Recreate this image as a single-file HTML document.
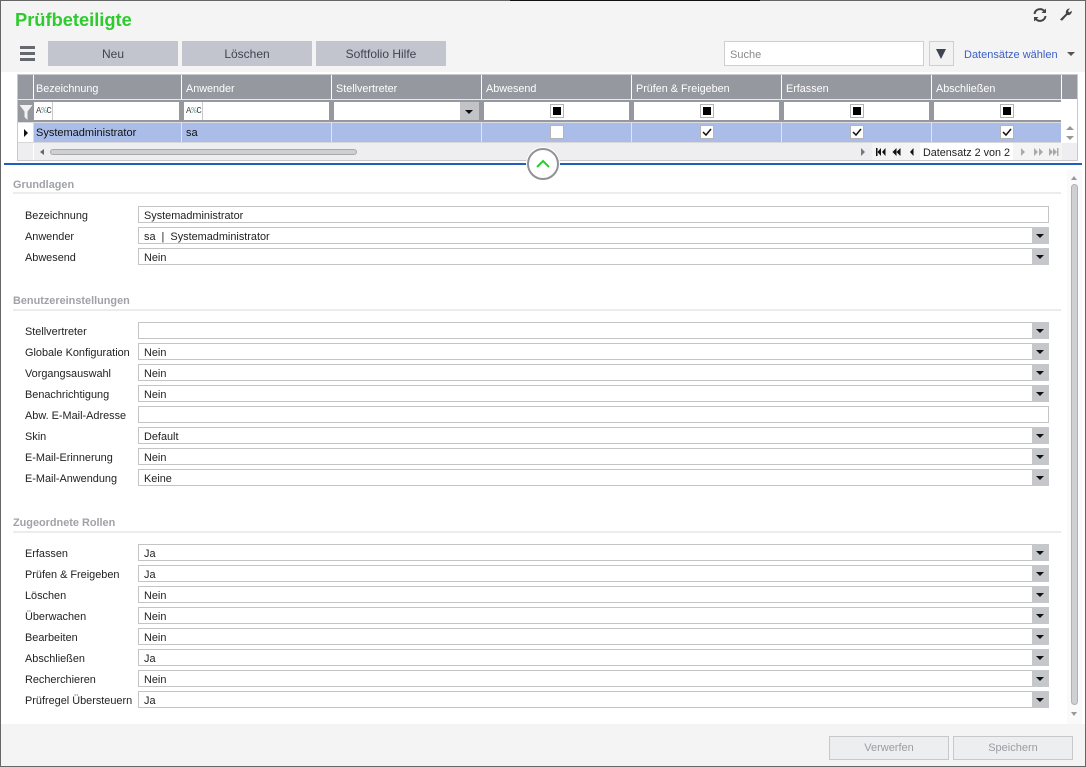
<!DOCTYPE html>
<html><head><meta charset="utf-8"><style>
*{box-sizing:border-box}
html,body{margin:0;padding:0}
body{width:1086px;height:767px;position:relative;overflow:hidden;background:#fff;font-family:"Liberation Sans",sans-serif;font-size:11px;color:#222}
div,span,svg{position:absolute}
.t{white-space:nowrap;line-height:14px}
.btn{top:41px;width:130px;height:25px;background:#c2c5cd;color:#3e4450;text-align:center;line-height:27px;font-weight:400;font-size:12px}
.gh{top:75px;height:24px;line-height:29px;color:#fff;background:#96989f;padding-left:2px;font-size:10.800px;white-space:nowrap}
.sep{width:1px;background:#fff}
.fc{top:102px;height:18px;background:#fff}
.cb{width:14px;height:14px;background:#fff;border:1px solid #b4b4b4}
.cb i{position:absolute;left:2px;top:2px;width:8px;height:8px;background:#000}
.lab{left:25px;white-space:nowrap;line-height:14px;color:#222;font-size:10.900px;margin-top:1px}
.in{left:138px;width:911px;height:17px;border:1px solid #c4c4c4;background:#fff;padding-left:5px;line-height:19px;font-size:10.900px;color:#222;white-space:nowrap;overflow:hidden}
.dd{left:1032px;width:17px;height:17px;background:#c6c7ca}
.dd:after{content:"";position:absolute;left:4px;top:7px;border-left:4px solid transparent;border-right:4px solid transparent;border-top:4px solid #111}
.h{left:13px;font-weight:700;color:#a0a2a8;font-size:10.900px;line-height:14px;white-space:nowrap;margin-top:1px}
.hl{left:13px;width:1048px;height:2px;background:#ececec}
.foot{top:736px;width:120px;height:24px;background:#edeef0;border:1px solid #c6c8cc;color:#9a9ca2;text-align:center;line-height:23px;font-size:11px;font-weight:400}
</style></head><body>
<div style="left:0;top:0;width:1086px;height:72px;background:#f4f4f4"></div>
<div style="left:0;top:724px;width:1086px;height:43px;background:#f4f4f4"></div>

<div class="t" style="left:15px;top:9px;font-size:18.300px;line-height:21px;font-weight:700;color:#2ecb2e">Prüfbeteiligte</div>

<svg style="left:1032px;top:7px" width="16" height="16" viewBox="0 0 16 16" fill="none" stroke="#444" stroke-width="2"><path d="M2.500 7A5.600 5.600 0 0 1 12.400 4.200"/><path d="M13.500 9A5.600 5.600 0 0 1 3.600 11.800"/><path d="M14 1.500V6H9.500z" fill="#444" stroke="none"/><path d="M2 14.500V10H6.500z" fill="#444" stroke="none"/></svg>
<svg style="left:1059px;top:7px" width="14" height="15" viewBox="0 0 14 15"><path d="M1 12.500L7 6.500C6.300 4 7.800 1.500 11 1.500L9 4l1.300 1.500 2.500-1.800C13 6.800 10.500 8.600 8.300 8L3 13.800z" fill="#444"/></svg>

<div style="left:20px;top:46px;width:15px;height:3px;background:#666970"></div>
<div style="left:20px;top:52px;width:15px;height:3px;background:#666970"></div>
<div style="left:20px;top:58px;width:15px;height:3px;background:#666970"></div>
<div class="btn" style="left:48px">Neu</div>
<div class="btn" style="left:182px">Löschen</div>
<div class="btn" style="left:316px">Softfolio Hilfe</div>

<div style="left:724px;top:41px;width:200px;height:25px;background:#fff;border:1px solid #cfcfcf;color:#8a8a8a;padding-left:5px;line-height:25px;font-size:11px"><span style="position:relative;top:1px">Suche</span></div>
<div style="left:929px;top:41px;width:25px;height:25px;background:#f2f2f2;border:1px solid #cfcfcf"></div>
<div style="left:936px;top:49px;width:0;height:0;border-left:5px solid transparent;border-right:5px solid transparent;border-top:10px solid #3e4450"></div>
<div class="t" style="left:964px;top:48px;color:#3b5fc4;font-size:11px">Datensätze wählen</div>
<div style="left:1067px;top:52px;width:0;height:0;border-left:4px solid transparent;border-right:4px solid transparent;border-top:4px solid #555"></div>

<!-- grid -->
<div style="left:17px;top:74px;width:1061px;height:87px;background:#fff;border:1px solid #c8c9cc"></div>
<div style="left:18px;top:75px;width:1059px;height:24px;background:#96989f"></div>
<div style="left:18px;top:99px;width:1043px;height:23px;background:#96989f"></div>
<div style="left:18px;top:99px;width:1043px;height:1px;background:#e8e8ea"></div>
<div class="gh" style="left:34px;width:147px">Bezeichnung</div>
<div class="gh" style="left:183px;width:148px;padding-left:3px">Anwender</div>
<div class="gh" style="left:333px;width:148px;padding-left:3px">Stellvertreter</div>
<div class="gh" style="left:483px;width:148px;padding-left:3px">Abwesend</div>
<div class="gh" style="left:633px;width:148px;padding-left:3px">Prüfen &amp; Freigeben</div>
<div class="gh" style="left:783px;width:148px;padding-left:3px">Erfassen</div>
<div class="gh" style="left:933px;width:128px;padding-left:3px">Abschließen</div>
<div class="sep" style="left:33px;top:75px;height:24px"></div>
<div class="sep" style="left:181px;top:75px;height:24px"></div>
<div class="sep" style="left:331px;top:75px;height:24px"></div>
<div class="sep" style="left:481px;top:75px;height:24px"></div>
<div class="sep" style="left:631px;top:75px;height:24px"></div>
<div class="sep" style="left:781px;top:75px;height:24px"></div>
<div class="sep" style="left:931px;top:75px;height:24px"></div>
<div class="sep" style="left:1061px;top:75px;height:24px"></div>

<svg style="left:19px;top:104px" width="14" height="16" viewBox="0 0 14 16"><path d="M0.500 1H13.500L8.500 7.500V16L5.500 13V7.500z" fill="#f2f2f2"/></svg>
<div class="fc" style="left:34px;width:145px"></div>
<div class="fc" style="left:184px;width:145px"></div>
<div class="fc" style="left:334px;width:126px"></div>
<div style="left:460px;top:102px;width:19px;height:18px;background:#c2c3c6"></div>
<div style="left:465px;top:110px;width:0;height:0;border-left:4px solid transparent;border-right:4px solid transparent;border-top:4px solid #111"></div>
<div class="fc" style="left:484px;width:145px"></div>
<div class="fc" style="left:634px;width:145px"></div>
<div class="fc" style="left:784px;width:145px"></div>
<div class="fc" style="left:934px;width:127px"></div>
<div style="left:52px;top:102px;width:1px;height:18px;background:#c8c8c8"></div>
<div style="left:202px;top:102px;width:1px;height:18px;background:#c8c8c8"></div>
<div class="t" style="left:36px;top:105px;font-family:'Liberation Mono',monospace;font-size:9px;letter-spacing:-0.200px;line-height:12px;color:#444">A<span style="position:static;color:#7aa">%</span>C</div>
<div class="t" style="left:186px;top:105px;font-family:'Liberation Mono',monospace;font-size:9px;letter-spacing:-0.200px;line-height:12px;color:#444">A<span style="position:static;color:#7aa">%</span>C</div>
<div class="cb" style="left:550px;top:104px"><i></i></div>
<div class="cb" style="left:700px;top:104px"><i></i></div>
<div class="cb" style="left:850px;top:104px"><i></i></div>
<div class="cb" style="left:1000px;top:104px"><i></i></div>

<div style="left:18px;top:122px;width:1043px;height:1px;background:#dcdde0"></div>
<div style="left:34px;top:123px;width:1027px;height:19px;background:#a9bde8"></div>
<div style="left:24px;top:129px;width:0;height:0;border-top:4px solid transparent;border-bottom:4px solid transparent;border-left:4px solid #111"></div>
<div class="sep" style="left:33px;top:122px;height:21px;background:#dcdde0"></div>
<div class="sep" style="left:181px;top:123px;height:19px;background:#dfe5f5"></div>
<div class="sep" style="left:331px;top:123px;height:19px;background:#dfe5f5"></div>
<div class="sep" style="left:481px;top:123px;height:19px;background:#dfe5f5"></div>
<div class="sep" style="left:631px;top:123px;height:19px;background:#dfe5f5"></div>
<div class="sep" style="left:781px;top:123px;height:19px;background:#dfe5f5"></div>
<div class="sep" style="left:931px;top:123px;height:19px;background:#dfe5f5"></div>
<div class="t" style="left:36px;top:126px;color:#111">Systemadministrator</div>
<div class="t" style="left:186px;top:126px;color:#111">sa</div>
<div class="cb" style="left:550px;top:125px"></div>
<div class="cb" style="left:700px;top:125px"></div>
<div class="cb" style="left:850px;top:125px"></div>
<div class="cb" style="left:1000px;top:125px"></div>
<svg style="left:702px;top:127px" width="10" height="10" viewBox="0 0 10 10"><path d="M1 5l3 3 5-6" fill="none" stroke="#111" stroke-width="1.500"/></svg>
<svg style="left:852px;top:127px" width="10" height="10" viewBox="0 0 10 10"><path d="M1 5l3 3 5-6" fill="none" stroke="#111" stroke-width="1.500"/></svg>
<svg style="left:1002px;top:127px" width="10" height="10" viewBox="0 0 10 10"><path d="M1 5l3 3 5-6" fill="none" stroke="#111" stroke-width="1.500"/></svg>
<div style="left:1066px;top:126px;width:0;height:0;border-left:4px solid transparent;border-right:4px solid transparent;border-bottom:4px solid #999"></div>
<div style="left:1066px;top:136px;width:0;height:0;border-left:4px solid transparent;border-right:4px solid transparent;border-top:4px solid #999"></div>

<div style="left:18px;top:143px;width:1059px;height:17px;background:#eeeef0"></div>
<div style="left:18px;top:142px;width:1043px;height:1px;background:#d8d8da"></div>
<div class="sep" style="left:33px;top:143px;height:17px;background:#fff"></div>
<div style="left:40px;top:149px;width:0;height:0;border-top:3px solid transparent;border-bottom:3px solid transparent;border-right:4px solid #666"></div>
<div style="left:50px;top:149px;width:307px;height:6px;background:#cfd0d4;border:1px solid #a8a9ae;border-radius:3px"></div>
<div style="left:861px;top:148px;width:0;height:0;border-top:4px solid transparent;border-bottom:4px solid transparent;border-left:4px solid #777"></div>
<div style="left:872px;top:143px;width:190px;height:17px;background:#f4f4f5"></div>
<div style="left:920px;top:143px;width:93px;height:17px;background:#fff"></div>
<svg style="left:875px;top:148px" width="46" height="8" viewBox="0 0 46 8" fill="#111"><rect x="1" y="0" width="1.500" height="8"/><path d="M6 0v8L2.500 4zM10.500 0v8L7 4zM21.500 0v8L17.500 4zM25.500 0v8L21.500 4zM38.500 0v8L35 4z"/></svg>
<div class="t" style="left:923px;top:146px;font-size:10.800px;color:#222">Datensatz 2 von 2</div>
<svg style="left:1019px;top:148px" width="40" height="8" viewBox="0 0 40 8" fill="#aaa"><path d="M2 0v8l4-4zM15 0v8l4-4zM20 0v8l4-4zM30 0v8l4-4zM34 0v8l4-4z"/><rect x="38" y="0" width="1.500" height="8"/></svg>

<div style="left:4px;top:163px;width:1078px;height:2px;background:#1f5fc2"></div>
<div style="left:527px;top:148px;width:32px;height:32px;border-radius:50%;background:#fff;border:2px solid #909298;box-shadow:0 0 0 1px #fff"></div>
<svg style="left:535px;top:158px" width="16" height="11" viewBox="0 0 16 11"><path d="M2 9L8 3l6 6" fill="none" stroke="#2ecb2e" stroke-width="2"/></svg>

<!-- form -->
<div class="h" style="top:177px">Grundlagen</div><div class="hl" style="top:192px"></div>
<div class="lab" style="top:208px">Bezeichnung</div><div class="in" style="top:206px">Systemadministrator</div>
<div class="lab" style="top:229px">Anwender</div><div class="in" style="top:227px">sa&nbsp; |&nbsp; Systemadministrator</div><div class="dd" style="top:227px"></div>
<div class="lab" style="top:250px">Abwesend</div><div class="in" style="top:248px">Nein</div><div class="dd" style="top:248px"></div>

<div class="h" style="top:293px">Benutzereinstellungen</div><div class="hl" style="top:309px"></div>
<div class="lab" style="top:324px">Stellvertreter</div><div class="in" style="top:322px"></div><div class="dd" style="top:322px"></div>
<div class="lab" style="top:345px">Globale Konfiguration</div><div class="in" style="top:343px">Nein</div><div class="dd" style="top:343px"></div>
<div class="lab" style="top:366px">Vorgangsauswahl</div><div class="in" style="top:364px">Nein</div><div class="dd" style="top:364px"></div>
<div class="lab" style="top:387px">Benachrichtigung</div><div class="in" style="top:385px">Nein</div><div class="dd" style="top:385px"></div>
<div class="lab" style="top:408px">Abw. E-Mail-Adresse</div><div class="in" style="top:406px"></div>
<div class="lab" style="top:429px">Skin</div><div class="in" style="top:427px">Default</div><div class="dd" style="top:427px"></div>
<div class="lab" style="top:450px">E-Mail-Erinnerung</div><div class="in" style="top:448px">Nein</div><div class="dd" style="top:448px"></div>
<div class="lab" style="top:471px">E-Mail-Anwendung</div><div class="in" style="top:469px">Keine</div><div class="dd" style="top:469px"></div>

<div class="h" style="top:515px">Zugeordnete Rollen</div><div class="hl" style="top:531px"></div>
<div class="lab" style="top:546px">Erfassen</div><div class="in" style="top:544px">Ja</div><div class="dd" style="top:544px"></div>
<div class="lab" style="top:567px">Prüfen &amp; Freigeben</div><div class="in" style="top:565px">Ja</div><div class="dd" style="top:565px"></div>
<div class="lab" style="top:588px">Löschen</div><div class="in" style="top:586px">Nein</div><div class="dd" style="top:586px"></div>
<div class="lab" style="top:609px">Überwachen</div><div class="in" style="top:607px">Nein</div><div class="dd" style="top:607px"></div>
<div class="lab" style="top:630px">Bearbeiten</div><div class="in" style="top:628px">Nein</div><div class="dd" style="top:628px"></div>
<div class="lab" style="top:651px">Abschließen</div><div class="in" style="top:649px">Ja</div><div class="dd" style="top:649px"></div>
<div class="lab" style="top:672px">Recherchieren</div><div class="in" style="top:670px">Nein</div><div class="dd" style="top:670px"></div>
<div class="lab" style="top:693px">Prüfregel Übersteuern</div><div class="in" style="top:691px">Ja</div><div class="dd" style="top:691px"></div>

<!-- scrollbar -->
<div style="left:1067px;top:170px;width:15px;height:554px;background:#fafafa"></div>
<div style="left:1071px;top:176px;width:0;height:0;border-left:3.500px solid transparent;border-right:3.500px solid transparent;border-bottom:4px solid #999"></div>
<div style="left:1071px;top:184px;width:7px;height:521px;background:#cfd0d4;border:1px solid #b0b1b6;border-radius:4px"></div>
<div style="left:1071px;top:712px;width:0;height:0;border-left:3.500px solid transparent;border-right:3.500px solid transparent;border-top:4px solid #999"></div>

<div class="foot" style="left:829px">Verwerfen</div>
<div class="foot" style="left:953px">Speichern</div>

<!-- window border -->
<div style="left:0;top:0;width:1086px;height:767px;border:1px solid #666;pointer-events:none"></div>
<div style="left:510px;top:0;width:250px;height:1px;background:#111"></div>
</body></html>
